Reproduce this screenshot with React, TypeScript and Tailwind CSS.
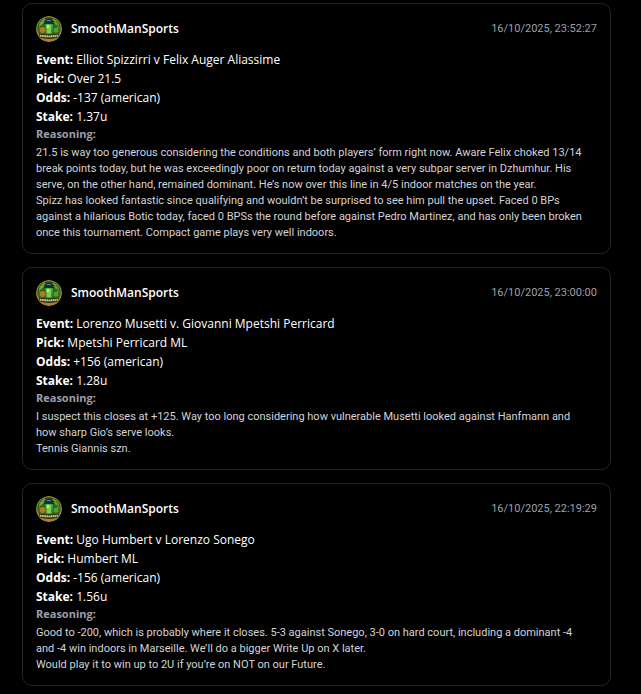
type Pick = {
  event: string;
  pick: string;
  odds: string;
  stake: string;
  date: string;
  reasoning: string[];
};

const picks: Pick[] = [
  {
    event: "Elliot Spizzirri v Felix Auger Aliassime",
    pick: "Over 21.5",
    odds: "-137 (american)",
    stake: "1.37u",
    date: "16/10/2025, 23:52:27",
    reasoning: [
      "21.5 is way too generous considering the conditions and both players’ form right now. Aware Felix choked 13/14 break points today, but he was exceedingly poor on return today against a very subpar server in Dzhumhur. His serve, on the other hand, remained dominant. He’s now over this line in 4/5 indoor matches on the year.",
      "Spizz has looked fantastic since qualifying and wouldn’t be surprised to see him pull the upset. Faced 0 BPs against a hilarious Botic today, faced 0 BPSs the round before against Pedro Martinez, and has only been broken once this tournament. Compact game plays very well indoors.",
    ],
  },
  {
    event: "Lorenzo Musetti v. Giovanni Mpetshi Perricard",
    pick: "Mpetshi Perricard ML",
    odds: "+156 (american)",
    stake: "1.28u",
    date: "16/10/2025, 23:00:00",
    reasoning: [
      "I suspect this closes at +125. Way too long considering how vulnerable Musetti looked against Hanfmann and how sharp Gio’s serve looks.",
      "Tennis Giannis szn.",
    ],
  },
  {
    event: "Ugo Humbert v Lorenzo Sonego",
    pick: "Humbert ML",
    odds: "-156 (american)",
    stake: "1.56u",
    date: "16/10/2025, 22:19:29",
    reasoning: [
      "Good to -200, which is probably where it closes. 5-3 against Sonego, 3-0 on hard court, including a dominant -4 and -4 win indoors in Marseille. We’ll do a bigger Write Up on X later.",
      "Would play it to win up to 2U if you’re on NOT on our Future.",
    ],
  },
];

function Avatar() {
  return (
    <svg viewBox="0 0 26 26" className="size-[26px] shrink-0 rounded-full" aria-hidden="true">
      <circle cx="13" cy="13" r="13" fill="#a08a2c" />
      <circle cx="13" cy="12.5" r="11.6" fill="#2f6322" />
      <path d="M3 9Q5 4 9 2.500L8 7Q5 8 4 13Z" fill="#75a03c" />
      <path d="M17 2.500Q21 4 23 9L22 14Q20 8 17 6Z" fill="#5e9632" />
      <path d="M4 10l4 3M22 9l-4 4" stroke="#1b451c" strokeWidth="1" />
      <circle cx="6.500" cy="14" r="3" fill="#b4761f" />
      <circle cx="20" cy="14" r="2.600" fill="#5a9a28" />
      <path d="M10.500 2.500h5l1 2.500H18v3.500H8V5h1.500z" fill="#123236" />
      <path d="M11 4h4v1h-4z" fill="#4f8a86" />
      <path d="M8.500 8h9l-1.300 11.500h-6.400z" fill="#2d8c34" />
      <path d="M10 8.500h5.500l-.5 9h-4z" fill="#7ad04a" />
      <path d="M11 9h2v3h-2z" fill="#d3e87a" />
      <path d="M2.500 18.500q10.500-1.500 21 0l-2 3.500q-8.500 3-17 0z" fill="#33381c" />
      <path d="M4 19.800q9 1 18 0" fill="none" stroke="#c9c89c" strokeWidth="1.800" strokeDasharray="1.700 .400" />
      <path d="M5.500 22.900q7.500 2 15 0" fill="none" stroke="#b27c22" strokeWidth="1.800" />
    </svg>
  );
}

function Detail({ label, value }: { label: string; value: string }) {
  return (
    <p>
      <strong className="font-bold">{label}:</strong> {value}
    </p>
  );
}

function PickCard({ item }: { item: Pick }) {
  return (
    <article className="rounded-[10px] border border-[#262626] px-[13px] py-3">
      <header className="mb-2 flex items-center justify-between">
        <div className="flex items-center gap-[9px]">
          <Avatar />
          <h2 className="text-[12px] leading-5 font-semibold">SmoothManSports</h2>
        </div>
        <time className="font-['Roboto','Noto_Sans',sans-serif] text-[11px] leading-4 text-[#9f9fa9]">{item.date}</time>
      </header>
      <div className="text-[12px] leading-[19px]">
        <Detail label="Event" value={item.event} />
        <Detail label="Pick" value={item.pick} />
        <Detail label="Odds" value={item.odds} />
        <Detail label="Stake" value={item.stake} />
      </div>
      <h3 className="mb-[3px] text-[11px] leading-4 font-bold text-[#9f9fa9]">Reasoning:</h3>
      <div className="pr-3 font-['Roboto','Noto_Sans',sans-serif] text-[11px] leading-4 text-[#d4d4d8]">
        {item.reasoning.map((text) => (
          <p key={text}>{text}</p>
        ))}
      </div>
    </article>
  );
}

export default function App() {
  return (
    <main className="flex min-h-screen flex-col gap-[13px] bg-black pt-[3px] pr-[30px] pb-[7px] pl-[22px] font-['Open_Sans','Noto_Sans',sans-serif] text-white">
      {picks.map((item) => (
        <PickCard key={item.date} item={item} />
      ))}
    </main>
  );
}
